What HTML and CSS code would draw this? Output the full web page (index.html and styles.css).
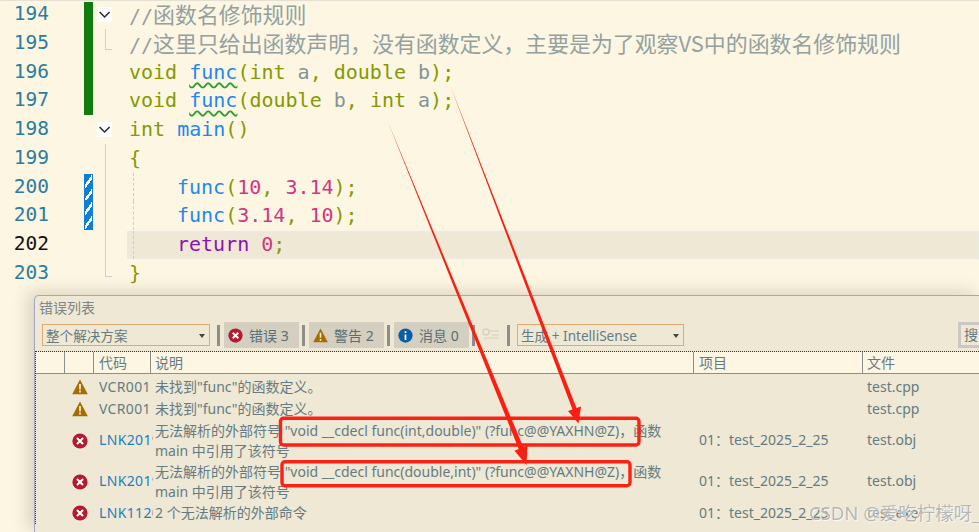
FILE: index.html
```html
<!DOCTYPE html>
<html lang="zh">
<head>
<meta charset="utf-8">
<title>错误列表</title>
<link rel="stylesheet" href="styles.css">
</head>
<body>
<svg class="defs" width="0" height="0" aria-hidden="true">
  <symbol id="i-err" viewBox="0 0 16 16"><circle cx="8" cy="8" r="7.6" fill="#b51a30"/><path d="M5 5l6 6M11 5l-6 6" stroke="#fff" stroke-width="2.1" fill="none"/></symbol>
  <symbol id="i-warn" viewBox="0 0 16 16"><path d="M8 .6L15.8 15.2H.2z" fill="#a56d00"/><path d="M8 5v5.4M8 11.6v2" stroke="#f6efdc" stroke-width="1.7" fill="none"/></symbol>
  <symbol id="i-info" viewBox="0 0 16 16"><circle cx="8" cy="8" r="7.6" fill="#0a5ea8"/><path d="M8 3.4v2M8 6.8v6" stroke="#fff" stroke-width="1.8" fill="none"/></symbol>
  <symbol id="i-fold" viewBox="0 0 15 15"><path d="M2.6 5l5 5 5-5" stroke="#2a2a2a" stroke-width="1.5" fill="none"/></symbol>
</svg>

<main class="editor">
  <div class="row"><span class="ln">194</span><span class="mark saved top"></span><span class="fold open"><svg width="15" height="15"><use href="#i-fold"/></svg></span><code class="code cm">//<span class="cjk">函数名修饰规则</span></code></div>
  <div class="row"><span class="ln">195</span><span class="mark saved"></span><span class="fold end short"></span><code class="code cm">//<span class="cjk">这里只给出函数声明，没有函数定义，主要是为了观察VS中的函数名修饰规则</span></code></div>
  <div class="row"><span class="ln">196</span><span class="mark saved"></span><span class="fold"></span><code class="code"><span class="kw">void</span> <span class="fn sq">func</span><span class="kw">(int</span> <span class="id">a</span><span class="kw">,</span> <span class="kw">double</span> <span class="id">b</span><span class="kw">);</span></code></div>
  <div class="row"><span class="ln">197</span><span class="mark saved"></span><span class="fold"></span><code class="code"><span class="kw">void</span> <span class="fn sq">func</span><span class="kw">(double</span> <span class="id">b</span><span class="kw">,</span> <span class="kw">int</span> <span class="id">a</span><span class="kw">);</span></code></div>
  <div class="row"><span class="ln">198</span><span class="mark"></span><span class="fold open"><svg width="15" height="15"><use href="#i-fold"/></svg></span><code class="code"><span class="kw">int</span> <span class="fn">main</span><span class="kw">()</span></code></div>
  <div class="row"><span class="ln">199</span><span class="mark"></span><span class="fold line"></span><code class="code kw">{</code></div>
  <div class="row"><span class="ln">200</span><span class="mark edit top"></span><span class="fold line"></span><code class="code guide"><span class="fn">func</span><span class="kw">(</span><span class="num">10</span><span class="kw">,</span> <span class="num">3.14</span><span class="kw">);</span></code></div>
  <div class="row"><span class="ln">201</span><span class="mark edit"></span><span class="fold line"></span><code class="code guide"><span class="fn">func</span><span class="kw">(</span><span class="num">3.14</span><span class="kw">,</span> <span class="num">10</span><span class="kw">);</span></code></div>
  <div class="row"><span class="ln current">202</span><span class="mark"></span><span class="fold line"></span><code class="code guide active"><span class="ret">return</span> <span class="num">0</span><span class="kw">;</span></code></div>
  <div class="row"><span class="ln">203</span><span class="mark"></span><span class="fold end"></span><code class="code kw">}</code></div>
</main>

<section class="panel">
  <h2 class="title">错误列表</h2>
  <div class="toolbar">
    <div class="dd dd-scope">整个解决方案<i class="caret"></i></div>
    <i class="sep"></i>
    <div class="btn"><svg width="15" height="15"><use href="#i-err"/></svg>错误 3</div>
    <i class="sep"></i>
    <div class="btn"><svg width="15" height="15"><use href="#i-warn"/></svg>警告 2</div>
    <i class="sep"></i>
    <div class="btn"><svg width="15" height="15"><use href="#i-info"/></svg>消息 0</div>
    <i class="sep"></i>
    <svg class="filter" width="20" height="16" viewBox="0 0 20 16"><circle cx="5" cy="5" r="3" fill="none" stroke="#d6d1c2" stroke-width="1.6"/><path d="M9 4h9M11 8h7M3 11h15" stroke="#dcd7c9" stroke-width="1.4"/></svg>
    <i class="sep"></i>
    <div class="dd dd-kind">生成 + IntelliSense<i class="caret"></i></div>
    <div class="search"><span>搜索错误列表</span></div>
  </div>
  <div class="table">
    <div class="tr head">
      <span class="c c1"></span><span class="c c2"></span><span class="c c3">代码</span><span class="c c4">说明</span><span class="c c5">项目</span><span class="c c6">文件</span>
    </div>
    <div class="tr">
      <span class="c c1"></span><span class="c c2"><svg width="16" height="16"><use href="#i-warn"/></svg></span><span class="c c3">VCR001</span><span class="c c4">未找到"func"的函数定义。</span><span class="c c5"></span><span class="c c6">test.cpp</span>
    </div>
    <div class="tr">
      <span class="c c1"></span><span class="c c2"><svg width="16" height="16"><use href="#i-warn"/></svg></span><span class="c c3">VCR001</span><span class="c c4">未找到"func"的函数定义。</span><span class="c c5"></span><span class="c c6">test.cpp</span>
    </div>
    <div class="tr tall">
      <span class="c c1"></span><span class="c c2"><svg width="16" height="16"><use href="#i-err"/></svg></span><span class="c c3 link">LNK2019</span><span class="c c4 wrap">无法解析的外部符号 "void __cdecl func(int,double)" (?func@@YAXHN@Z)，函数<br>main 中引用了该符号</span><span class="c c5">01：test_2025_2_25</span><span class="c c6">test.obj</span>
    </div>
    <div class="tr tall">
      <span class="c c1"></span><span class="c c2"><svg width="16" height="16"><use href="#i-err"/></svg></span><span class="c c3 link">LNK2019</span><span class="c c4 wrap">无法解析的外部符号 "void __cdecl func(double,int)" (?func@@YAXNH@Z)，函数<br>main 中引用了该符号</span><span class="c c5">01：test_2025_2_25</span><span class="c c6">test.obj</span>
    </div>
    <div class="tr">
      <span class="c c1"></span><span class="c c2"><svg width="16" height="16"><use href="#i-err"/></svg></span><span class="c c3 link">LNK1120</span><span class="c c4">2 个无法解析的外部命令</span><span class="c c5">01：test_2025_2_25</span><span class="c c6">test.exe</span>
    </div>
  </div>
</section>

<svg class="notes" width="979" height="532" viewBox="0 0 979 532" aria-hidden="true">
  <rect class="box" x="280.5" y="418.3" width="358.5" height="26.7" rx="3"/>
  <rect class="box" x="282" y="461.7" width="348" height="24" rx="3"/>
  <polygon class="arrow" points="450,85 576.5,408 581,406.5 578.5,423.5 568,411 572.5,409.5"/>
  <polygon class="arrow" points="388,122 523.3,447.3 527.5,445.6 526.5,465 514.5,450.8 518.7,449.1"/>
</svg>
<div class="watermark">CSDN @爱吃柠檬呀_</div>
</body>
</html>
```
FILE: styles.css
```css
* { box-sizing: border-box; }
html, body { margin: 0; height: 100%; }
body {
  position: relative;
  width: 979px;
  height: 532px;
  overflow: hidden;
  background: #fdf6e3;
  font-family: "Noto Sans", "Noto Sans CJK SC", sans-serif;
  color: #657b83;
}
.defs { position: absolute; }

/* editor */
.editor {
  height: 295px;
  font: 20px/28.75px "DejaVu Sans Mono", "Noto Sans CJK SC", monospace;
  box-shadow: inset 0 1px 0 #e4e0d4;
}
.row { display: flex; height: 28.75px; }
.ln { width: 50px; margin-left: -1px; text-align: right; color: #2b7d9e; font-size: 19.5px; }
.ln.current { color: #111; }
.mark { width: 9px; margin-left: 35px; flex: none; }
.mark.saved { background: #107c10; }
.mark.saved.top { margin-top: 2px; }
.mark.edit {
  background: repeating-linear-gradient(125deg, #0f7fd6 0 5.5px, #fff 5.5px 8px);
  border: 1px solid #0f7fd6;
}
.mark.edit.top { margin-top: 1.5px; }
.fold { position: relative; width: 15px; margin-left: 4px; margin-right: 17px; flex: none; }
.fold.open svg { display: block; margin-top: 7px; background: #fff; }
.fold.line::before, .fold.end::before {
  content: ""; position: absolute; left: 8px; top: 0; bottom: 0; width: 1px; background: #cfd0cf;
}
.fold.end::before { bottom: 11px; }
.fold.short::before { top: 0; bottom: 8px; }
.fold.end::after {
  content: ""; position: absolute; left: 8px; bottom: 11px; width: 7px; height: 1px; background: #cfd0cf;
}
.fold.short::after { bottom: 8px; }
.code { position: relative; flex: 1; font: inherit; white-space: pre; }
.cm { color: #93a1a1; }
.cjk { font-family: "Noto Sans CJK SC", sans-serif; font-size: 21.9px; }
.kw { color: #859900; }
.id { color: #839496; }
.fn { color: #1e88f0; }
.num { color: #d33682; }
.ret { color: #8a12b5; }
.sq {
  text-decoration: underline wavy #2ea02e 1.5px;
  text-underline-offset: 3px;
}
.guide { padding-left: 48px; }
.guide::before {
  content: ""; position: absolute; left: 4px; top: 0; bottom: 0;
  border-left: 1px dashed #cfcdc4;
}
.active {
  background: #eee8d5;
  box-shadow: inset 0 0 0 2px #ebe9e0;
  margin-top: 1px;
  margin-left: -2px;
  padding-left: 50px;
  line-height: 26.75px;
}
.active::before { left: 6px; }

/* error list */
.panel {
  margin-left: 34px;
  height: 237px;
  background: #eee8d5;
  border: 1px solid #a0a6c8;
  border-right: 0;
  border-bottom: 0;
  border-top-left-radius: 5px;
  box-shadow: -6px -3px 16px rgba(90, 80, 50, .22);
  font-size: 14px;
  overflow: hidden;
}
.title { margin: 0; padding: 2px 0 0 4px; height: 26px; font-size: 14px; line-height: 20px; font-weight: 400; color: #7a8688; }
.toolbar { display: flex; align-items: center; height: 26px; padding-left: 7px; }
.sep { width: 3px; height: 21px; margin: 0 4px 0 3px; background: #8d8f8c; flex: none; }
.dd {
  position: relative; height: 22px; line-height: 21px; padding-left: 3px;
  border: 1px solid #e0aa72; font-size: 13.6px; flex: none;
}
.dd-scope { width: 168px; margin-right: 4px; }
.dd-kind { width: 167px; margin-left: 3px; }
.caret {
  position: absolute; right: 4px; top: 9px; width: 0; height: 0;
  border: 3.5px solid transparent; border-top: 4px solid #444; border-bottom: 0;
}
.btn {
  display: flex; align-items: center; gap: 6px; width: 75px; height: 26px; padding-left: 4px;
  background: #d4cfc0; font-size: 14px; color: #586e75; flex: none;
}
.filter { margin: 0 3px 0 2px; flex: none; }
.search {
  margin-left: auto; width: 21px; height: 26px; background: #eee8d5; overflow: hidden;
  border: 3px solid #c9c8c6; border-right: 0; line-height: 20px; white-space: nowrap; padding-left: 3px;
}
.table { margin-top: 3px; border-top: 1px dotted #333; border-left: 1px dotted #333; }
.tr { display: flex; height: 22px; line-height: 22px; }
.tr.tall { height: 41px; line-height: 40px; }
.head { height: 22px; background: #fdf6e3; border-bottom: 1px solid #8d8f8c; margin-bottom: 2px; }
.c { flex: none; height: 100%; overflow: hidden; white-space: nowrap; }
.c1 { width: 28px; }
.c2 { width: 29px; display: flex; align-items: center; justify-content: center; padding-left: 2px; }
.c3 { width: 59.5px; padding-left: 6px; letter-spacing: .35px; }
.c4 { width: 540.5px; padding-left: 2.5px; }
.c5 { width: 169px; padding-left: 6px; }
.c6 { width: 117px; padding-left: 5px; }
.head .c { border-right: 1px solid #8d8f8c; line-height: 21px; }
.head .c1 { width: 29px; }
.head .c3 { width: 57px; padding-left: 5px; letter-spacing: 0; }
.head .c4 { width: 543px; padding-left: 4px; }
.head .c5 { padding-left: 5px; }
.head .c6 { border-right: 0; padding-left: 4px; }
.link { color: #1c7fc4; }
.wrap { line-height: 19.5px; padding-top: 1px; }

/* overlays */
.notes { position: absolute; left: 0; top: 0; pointer-events: none; }
.box { fill: none; stroke: #fa2215; stroke-width: 3.4; }
.arrow { fill: #fa1f12; }
.watermark {
  position: absolute; left: 809px; bottom: 7px; font-size: 18.5px; line-height: 24px; white-space: nowrap;
  color: rgba(120, 120, 115, .55); text-shadow: 0 0 1px #fff, 1px 1px 1px rgba(255,255,255,.8);
}
```
